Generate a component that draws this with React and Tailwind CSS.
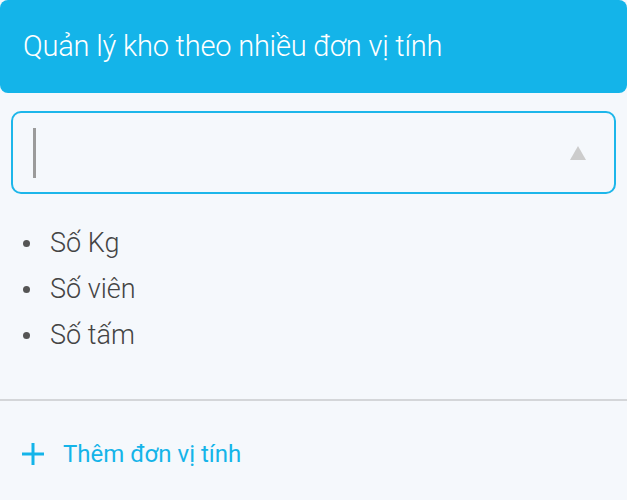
export default function App() {
  return (
    <div className="w-[627px] h-[500px] bg-[#f5f8fc] overflow-hidden" style={{ fontFamily: "Roboto, 'Noto Sans', sans-serif" }}>
      <div className="h-[93px] bg-[#14b4e9] rounded-[8px] flex items-center pl-[23px]">
        <span className="text-white text-[29px] font-light tracking-[-0.2px]">Quản lý kho theo nhiều đơn vị tính</span>
      </div>
      <div className="px-[11px] pt-[18px]">
        <div className="h-[83px] border-2 border-[#1db6ea] rounded-[10px] flex items-center justify-between pl-[20px] pr-[28px]">
          <div className="w-[3px] h-[50px] bg-[#9b9b9b]" />
          <svg width="16" height="14" viewBox="0 0 16 14"><polygon points="8,0 16,14 0,14" fill="#cccccc" /></svg>
        </div>
      </div>
      <ul className="pt-[32px] pl-[23px] flex flex-col gap-[12px] text-[#444] text-[27px] font-light h-[205px]">
        {["Số Kg", "Số viên", "Số tấm"].map((t) => (
          <li key={t} className="flex items-center h-[34px]">
            <span className="w-[7px] h-[7px] rounded-full bg-[#555] mr-[20px]" />
            <span>{t}</span>
          </li>
        ))}
      </ul>
      <div className="h-[2px] bg-[#d4d6d9]" />
      <div className="flex items-center pl-[20px] pt-[35px]">
        <svg width="26" height="26" viewBox="0 0 26 26" className="mr-[17px]"><path d="M13 2v22M2 13h22" stroke="#14b4e9" strokeWidth="3" /></svg>
        <span className="text-[#14b4e9] text-[24px]">Thêm đơn vị tính</span>
      </div>
    </div>
  );
}
